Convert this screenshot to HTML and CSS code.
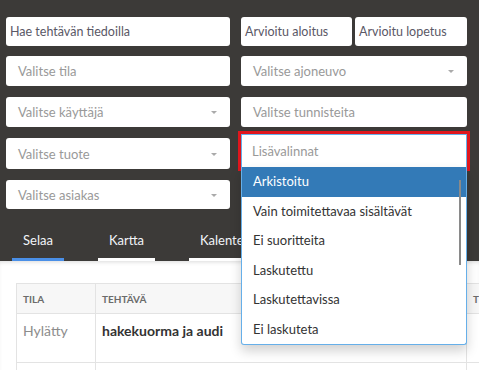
FILE: index.html
```html
<!DOCTYPE html>
<html>
<head>
    <title>Tehtävät</title>
    <meta charset="utf-8">
    <meta name="viewport" content="width=device-width, initial-scale=1">
    <link rel="stylesheet" href="styles.css">
</head>
<body>
    <div class="filters">
        <div class="filter-grid">
            <div class="field search">Hae tehtävän tiedoilla</div>
            <div class="dates">
                <div class="field search">Arvioitu aloitus</div>
                <div class="field search">Arvioitu lopetus</div>
            </div>

            <div class="field">Valitse tila</div>
            <div class="field select">Valitse ajoneuvo</div>

            <div class="field select">Valitse käyttäjä</div>
            <div class="field">Valitse tunnisteita</div>

            <div class="field select">Valitse tuote</div>
            <div class="combo">
                <div class="field focused">Lisävalinnat</div>
                <ul class="options">
                    <li class="active">Arkistoitu</li>
                    <li>Vain toimitettavaa sisältävät</li>
                    <li>Ei suoritteita</li>
                    <li>Laskutettu</li>
                    <li>Laskutettavissa</li>
                    <li>Ei laskuteta</li>
                </ul>
                <div class="scrollbar"></div>
            </div>

            <div class="field select">Valitse asiakas</div>
            <div></div>
        </div>

        <div class="tabs">
            <div class="tab current">Selaa</div>
            <div class="tab">Kartta</div>
            <div class="tab">Kalenteri</div>
        </div>
    </div>

    <div class="content">
        <table class="tasks">
            <thead>
                <tr>
                    <th class="col-state">Tila</th>
                    <th class="col-task">Tehtävä</th>
                    <th>Tuote</th>
                </tr>
            </thead>
            <tbody>
                <tr>
                    <td class="state">Hylätty</td>
                    <td class="task">hakekuorma ja audi</td>
                    <td></td>
                </tr>
                <tr>
                    <td></td>
                    <td></td>
                    <td></td>
                </tr>
            </tbody>
        </table>
    </div>
</body>
</html>
```

FILE: styles.css
```css
body {
    margin: 0;
    font-family: Lato, "Open Sans", sans-serif;
    font-size: 13px;
    background: #ffffff;
    overflow: hidden;
}
.filters {
    background: #3c3a38;
    padding: 17px 12px 0 6px;
}
.filter-grid {
    display: grid;
    grid-template-columns: 224px 226px;
    grid-template-rows: 28px 30px 30px 31px 29px;
    column-gap: 11px;
    row-gap: 11px;
}
.filter-grid > :first-child,
.dates {
    margin-bottom: -1px;
}
.field {
    position: relative;
    background: #fff;
    border-radius: 3px;
    padding: 0 12px;
    color: #999;
    display: flex;
    align-items: center;
}
.field.search {
    padding: 0 4px;
    color: #5a5866;
    font-size: 12.5px;
}
.dates {
    display: grid;
    grid-template-columns: 111px 112px;
    column-gap: 3px;
}
.select::after {
    content: "";
    position: absolute;
    right: 13px;
    top: 50%;
    margin-top: -1px;
    border-left: 3px solid transparent;
    border-right: 3px solid transparent;
    border-top: 3px solid #aaa;
}
.combo {
    position: relative;
}
.field.focused {
    height: 34px;
    margin-top: -4px;
    box-sizing: border-box;
    border: 1px solid #66afe9;
    border-radius: 0;
    padding: 0 10px;
    outline: 3px solid #e0161d;
}
.options {
    position: absolute;
    top: 29px;
    left: 0;
    width: 224px;
    margin: 0;
    padding: 0;
    list-style: none;
    background: #fff;
    border: 1px solid #66afe9;
    border-top: none;
    border-radius: 0 0 3px 3px;
    box-shadow: 0 6px 12px rgba(0,0,0,0.18);
    z-index: 5;
}
.options li {
    height: 29.5px;
    line-height: 29px;
    padding: 0 11px;
    color: #333;
}
.options li.active {
    background: #337ab7;
    color: #fff;
}
.scrollbar {
    position: absolute;
    top: 42px;
    left: 218px;
    width: 2px;
    height: 85px;
    background: #8a8a8a;
    z-index: 6;
}
.tabs {
    display: flex;
    gap: 34px;
    padding: 23px 0 0 6px;
}
.tab {
    padding: 0 11px 10px;
    color: #f2f4f8;
    font-size: 13px;
    border-bottom: 3px solid #fff;
}
.tab.current {
    border-bottom-color: #4a8fe7;
}
.content {
    padding: 22px 0 0 16px;
    box-shadow: inset 0 3px 4px -2px rgba(0,0,0,0.15);
}
.tasks {
    border-collapse: collapse;
    width: 520px;
    background: #fff;
    border: 1px solid #e3e3e3;
}
.tasks th {
    height: 29px;
    padding: 0 6px;
    text-align: left;
    background: #f7f7f7;
    color: #6b6b6b;
    font-size: 10px;
    font-weight: bold;
    text-transform: uppercase;
    border: 1px solid #e3e3e3;
}
.tasks td {
    height: 49px;
    padding: 8px 6px 0;
    vertical-align: top;
    font-size: 14px;
    border: 1px solid #e3e3e3;
    box-sizing: border-box;
}
.col-state {
    width: 66px;
}
.col-task {
    width: 358px;
}
.state {
    color: #8c8c8c;
}
.task {
    color: #333;
    font-weight: bold;
}
```
